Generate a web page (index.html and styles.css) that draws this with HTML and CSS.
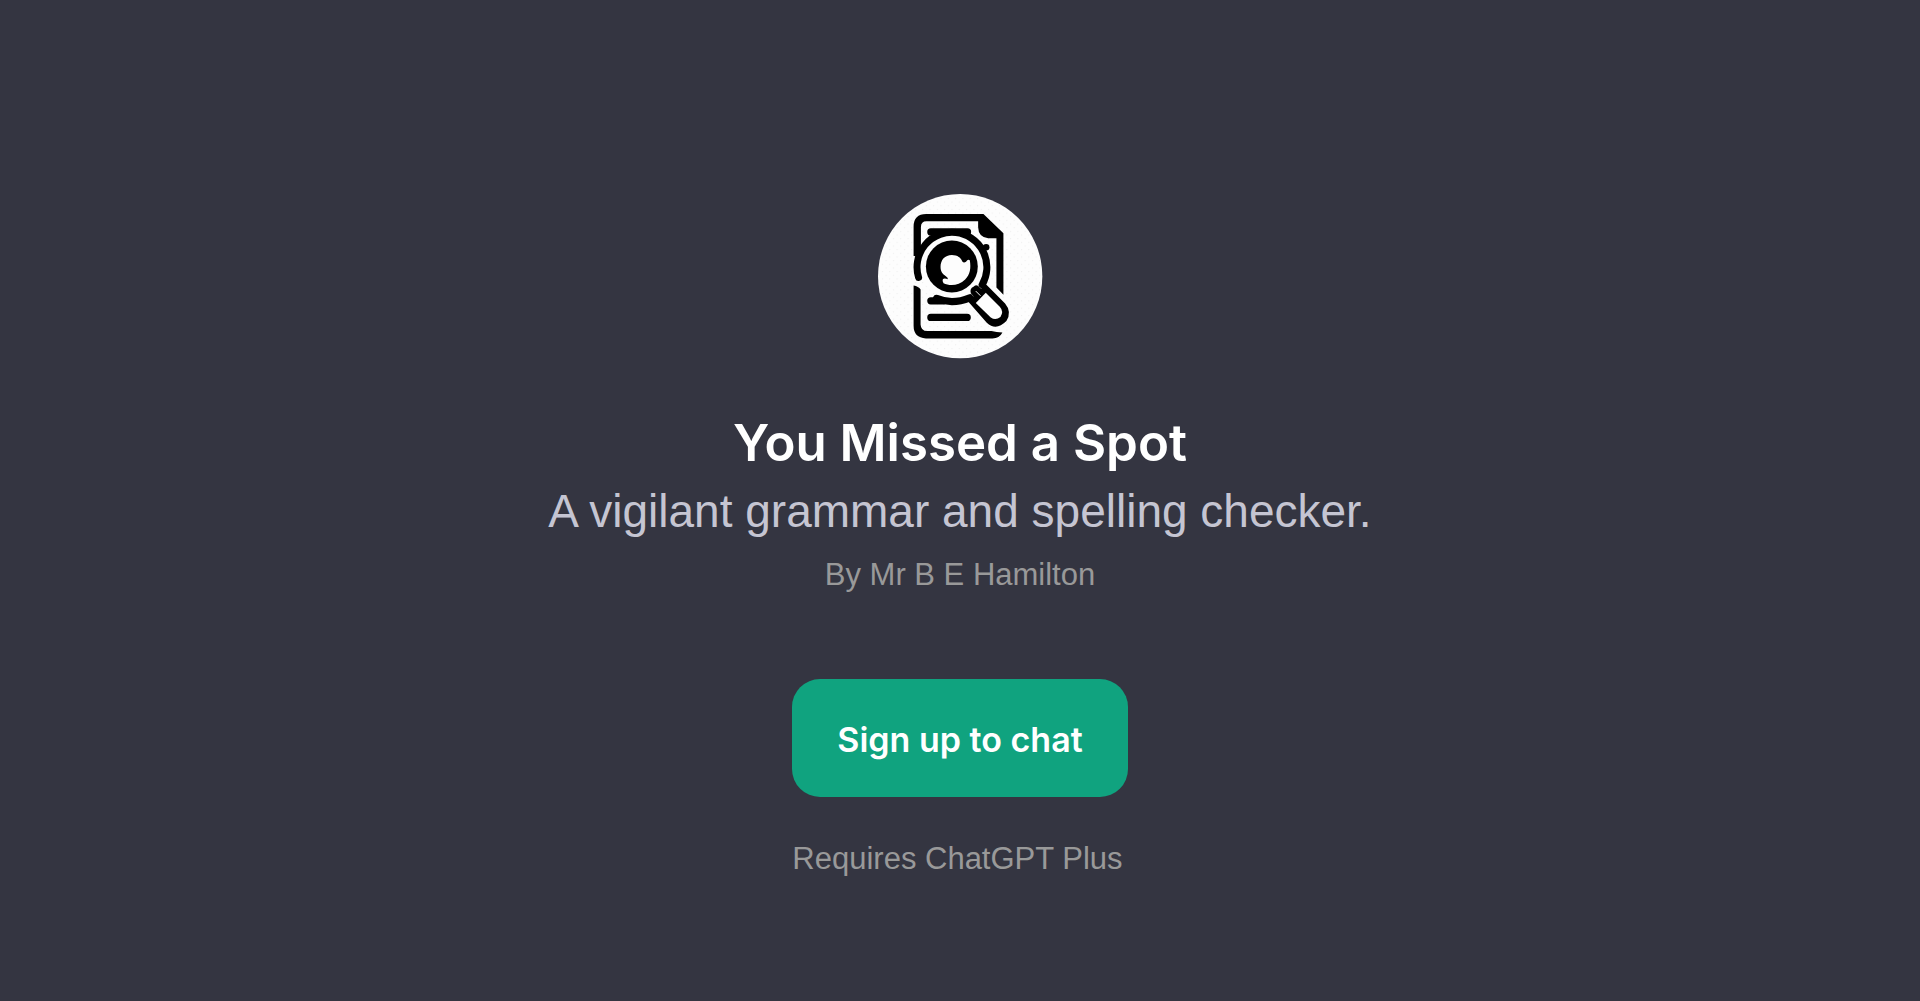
FILE: index.html
```html
<!DOCTYPE html>
<html lang="en">
  <head>
    <meta charset="UTF-8" />
    <meta name="viewport" content="width=device-width, initial-scale=1.0" />
    <title>You Missed a Spot</title>
    <link rel="stylesheet" href="styles.css">
  </head>
  <body>
    <main class="gpt-card">
      <svg class="logo" viewBox="24 24 496 496" aria-hidden="true">
        <defs>
          <pattern id="dots" width="22" height="22" patternUnits="userSpaceOnUse">
            <rect x="3" y="3" width="3" height="3" fill="#ececec" />
            <rect x="14" y="14" width="3" height="3" fill="#ececec" />
          </pattern>
        </defs>
        <circle cx="271" cy="271" r="247" fill="#fdfdfd" />
        <circle cx="271" cy="271" r="245" fill="url(#dots)" />
        <!-- page -->
        <path d="M131 210V122Q131 84 169 84H341L401 142V327L380 305V157H355Q326 154 325 124V106H170Q153 106 153 124V212Z" />
        <path d="M131 299Q146 302 152 311V416Q153 436 172 436H365Q380 440 398 440Q389 458 368 458H168Q131 456 131 420Z" />
        <path d="M183 138H293M183 345H220M183 395H292" fill="none" stroke="#000" stroke-width="22" stroke-linecap="round" />
        <circle cx="349" cy="184" r="10" />
        <!-- lens -->
        <circle cx="247" cy="243" r="96" fill="#fdfdfd" />
        <path d="M146 275A105 105 0 1 1 337 297" fill="none" stroke="#000" stroke-width="21" stroke-linecap="round" />
        <path d="M200 338Q247 358 300 336" fill="none" stroke="#000" stroke-width="22" stroke-linecap="round" />
        <circle cx="246" cy="242" r="78" />
        <path fill="#fdfdfd" d="M212 243C212 222 225 207 246 207C263 207 274 216 277 226C280 231 287 231 291 225Q295 219 300 223C304 247 301 265 286 281C267 300 239 301 221 292Q216 287 219 280Q223 276 234 280Q235 275 228 271C218 265 212 257 212 243Z" />
        <!-- handle -->
        <path d="M295 347L311 331L303 322Q299 308 311 303Q319 293 330 305L334 309L347 294L406 353Q427 378 410 406Q379 437 351 411Z" />
        <path fill="#fdfdfd" d="M318 352L348 321L390 363Q403 377 392 394Q377 405 363 395Z" />
        <path d="M318 316L332 330" stroke="#fdfdfd" stroke-width="3" />
      </svg>
      <h1 class="title">You Missed a Spot</h1>
      <p class="description">A vigilant grammar and spelling checker.</p>
      <p class="note">By Mr B E Hamilton</p>
      <div class="actions">
        <button class="signup" type="button">Sign up to chat</button>
        <p class="note">Requires ChatGPT Plus</p>
      </div>
    </main>
  </body>
</html>
```
FILE: styles.css
```css
* {
  box-sizing: border-box;
}

body {
  margin: 0;
  min-height: 100vh;
  background-color: #343541;
  color: white;
  font-family: "Liberation Sans", Arial, sans-serif;
}

.gpt-card {
  display: flex;
  flex-direction: column;
  align-items: center;
  padding: 194px 24px 96px;
  text-align: center;
}

.logo {
  width: 165px;
  height: 165px;
}

.title {
  margin: 48px 0 0;
  font-family: "Inter", sans-serif;
  font-size: 51px;
  font-weight: 600;
  line-height: 72px;
}

.description {
  margin: 0;
  color: #c5c5d2;
  font-size: 46px;
  line-height: 64px;
}

.note {
  margin: 8px 0 0;
  color: #999999;
  font-size: 31px;
  line-height: 48px;
}

.actions {
  margin-top: 80px;
  text-align: left;
}

.signup {
  display: block;
  margin-bottom: 38px;
  padding: 34px 45px 30px;
  border: none;
  border-radius: 28px;
  background-color: #10a37f;
  color: white;
  font-family: "Inter", sans-serif;
  font-size: 34px;
  font-weight: 600;
  line-height: 54px;
  cursor: pointer;
}
```
